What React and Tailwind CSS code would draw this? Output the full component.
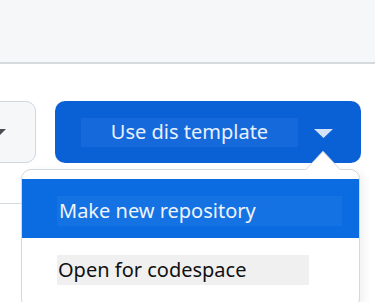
export default function App() {
  const font = { fontFamily: '"Noto Sans", "Open Sans", sans-serif' };
  return (
    <div className="relative w-[375px] h-[302px] overflow-hidden bg-white" style={font}>
      <div className="h-[64px] bg-[#f6f7f9] border-b-2 border-[#d5dadd]" />
      <div className="flex mt-[37px] h-[62px]">
        <div className="ml-[-60px] w-[96px] h-[62px] rounded-[10px] border border-[#d0d7de] bg-[#f6f7f9] flex items-center justify-end pr-[29px] shrink-0">
          <svg width="14" height="8" viewBox="0 0 14 8" className="mt-[2px]">
            <path d="M0 0 H14 L7 7 Z" fill="#4a4d52" />
          </svg>
        </div>
        <div className="ml-[19px] w-[306px] h-[62px] rounded-[10px] bg-[#0a61d6] flex items-center shrink-0">
          <div className="ml-[26px] w-[217px] h-[29px] bg-[#1569db] flex items-center justify-center text-[20px] text-[#e9f0fb] leading-none">
            Use dis template
          </div>
          <svg width="19" height="9" viewBox="0 0 19 9" className="ml-[16px] mt-[2px]">
            <path d="M0 0 H19 L9.5 9 Z" fill="#d3e2f7" />
          </svg>
        </div>
      </div>
      <div className="mt-[40px] w-[22px] h-[1px] bg-[#d4d9dd]" />

      <div className="absolute left-[21px] top-[169px] w-[339px] h-[140px] rounded-[10px] border border-[#d3d8dc] bg-white shadow-[4px_2px_8px_rgba(0,0,0,0.06)] overflow-hidden">
        <div className="mt-[9px] h-[59px] bg-[#0b6be0] pt-[17px] pl-[35px]">
          <div className="w-[285px] h-[30px] bg-[#1572e2] flex items-center text-[20px] text-[#eef4fc] leading-none pl-[2px]">
            Make new repository
          </div>
        </div>
        <div className="mt-[17px] pl-[35px]">
          <div className="w-[252px] h-[30px] bg-[#f0f0f0] flex items-center text-[20px] text-[#111] leading-none pl-[1px]">
            Open for codespace
          </div>
        </div>
      </div>
      <svg className="absolute left-[305px] top-[150px]" width="36" height="21" viewBox="0 0 36 21">
        <path d="M0 20 L18 1 L36 20 Z" fill="#ffffff" />
        <path d="M0.5 20 L18 1.5 L35.5 20" fill="none" stroke="#d3d8dc" strokeWidth="1" />
      </svg>
    </div>
  );
}
